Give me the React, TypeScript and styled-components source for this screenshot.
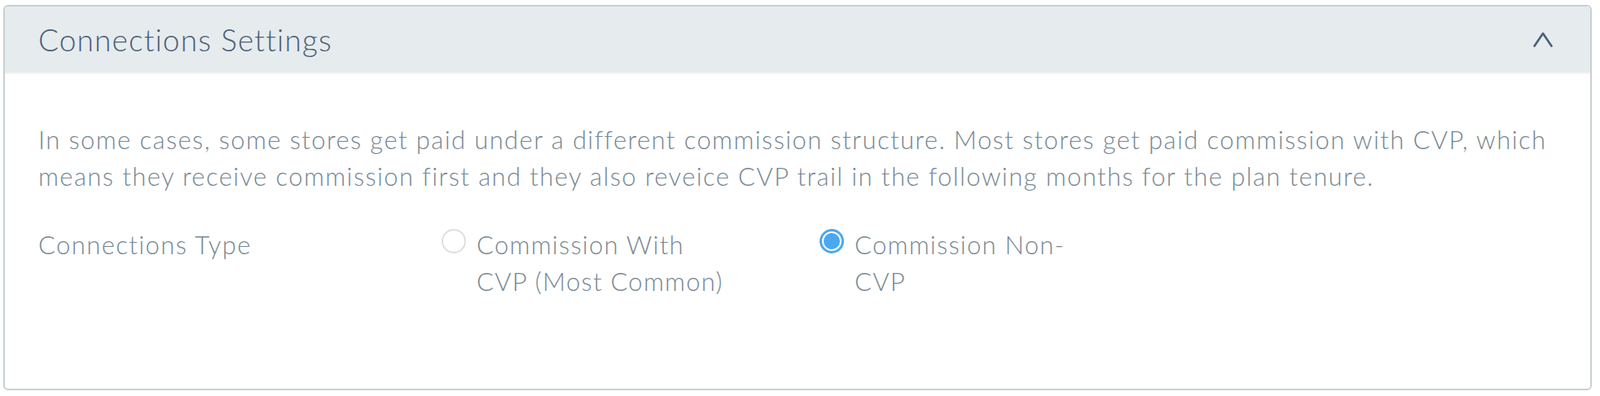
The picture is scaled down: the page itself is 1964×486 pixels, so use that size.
import React from "react";
import styled, { createGlobalStyle } from "styled-components";

const GlobalStyle = createGlobalStyle`
  body {
    margin: 0;
    background: #ffffff;
    font-family: "Lato", "Open Sans", sans-serif;
  }
`;

const Page = styled.div`
  padding: 6px 10px 7px 4px;
`;

const Card = styled.section`
  box-sizing: border-box;
  height: 473px;
  border: 2px solid #c6d0d4;
  border-radius: 6px;
  overflow: hidden;
  background: #ffffff;
`;

const CardHeader = styled.div`
  display: flex;
  align-items: center;
  justify-content: space-between;
  height: 81px;
  padding: 0 46px 0 41px;
  background: #e6ebee;
  border-bottom: 2px solid #f2f5f6;
`;

const CardTitle = styled.h2`
  margin: 0;
  font-size: 37px;
  font-weight: 300;
  color: #4b5f77;
  letter-spacing: 1.15px;
`;

const Toggle = styled.button`
  display: flex;
  padding: 0;
  border: none;
  background: none;
  cursor: pointer;
`;

const CardBody = styled.div`
  padding: 58px 41px 0 41px;
  color: #778792;
  font-size: 31px;
  font-weight: 300;
  line-height: 45px;
  letter-spacing: 1.4px;
`;

const Description = styled.p`
  margin: 0 0 39px 0;
`;

const FieldRow = styled.div`
  display: flex;
  align-items: flex-start;
`;

const FieldLabel = styled.div`
  width: 495px;
`;

const Options = styled.div`
  display: flex;
  gap: 103px;
`;

const Option = styled.label`
  display: flex;
  align-items: flex-start;
  gap: 13px;
  cursor: pointer;
`;

const RadioCircle = styled.span<{ checked: boolean }>`
  box-sizing: border-box;
  flex-shrink: 0;
  display: flex;
  align-items: center;
  justify-content: center;
  width: 30px;
  height: 30px;
  margin-top: 3px;
  border-radius: 50%;
  border: ${({ checked }) =>
    checked ? "3px solid #4aa8f1" : "2px solid #dedede"};
  background: #ffffff;

  &::after {
    content: "";
    display: ${({ checked }) => (checked ? "block" : "none")};
    width: 20px;
    height: 20px;
    border-radius: 50%;
    background: #4aa8f1;
  }
`;

const OptionText = styled.span`
  width: 318px;
  letter-spacing: 1.25px;
`;

const ChevronUp = () => (
  <svg width="24" height="19" viewBox="0 0 24 19" fill="none">
    <polyline
      points="1.5,17.5 12,2 22.5,17.5"
      stroke="#4b5f77"
      strokeWidth="2.6"
      strokeLinecap="round"
      strokeLinejoin="round"
    />
  </svg>
);

const options = [
  { id: "cvp", label: "Commission With CVP (Most Common)", checked: false },
  { id: "noncvp", label: "Commission Non-CVP", checked: true },
];

const App: React.FC = () => (
  <>
    <GlobalStyle />
    <Page>
      <Card>
        <CardHeader>
          <CardTitle>Connections Settings</CardTitle>
          <Toggle aria-label="Collapse">
            <ChevronUp />
          </Toggle>
        </CardHeader>
        <CardBody>
          <Description>
            In some cases, some stores get paid under a different commission
            structure. Most stores get paid commission with CVP, which means
            they receive commission first and they also reveice CVP trail in
            the following months for the plan tenure.
          </Description>
          <FieldRow>
            <FieldLabel>Connections Type</FieldLabel>
            <Options>
              {options.map((option) => (
                <Option key={option.id}>
                  <RadioCircle checked={option.checked} />
                  <OptionText>{option.label}</OptionText>
                </Option>
              ))}
            </Options>
          </FieldRow>
        </CardBody>
      </Card>
    </Page>
  </>
);

export default App;
